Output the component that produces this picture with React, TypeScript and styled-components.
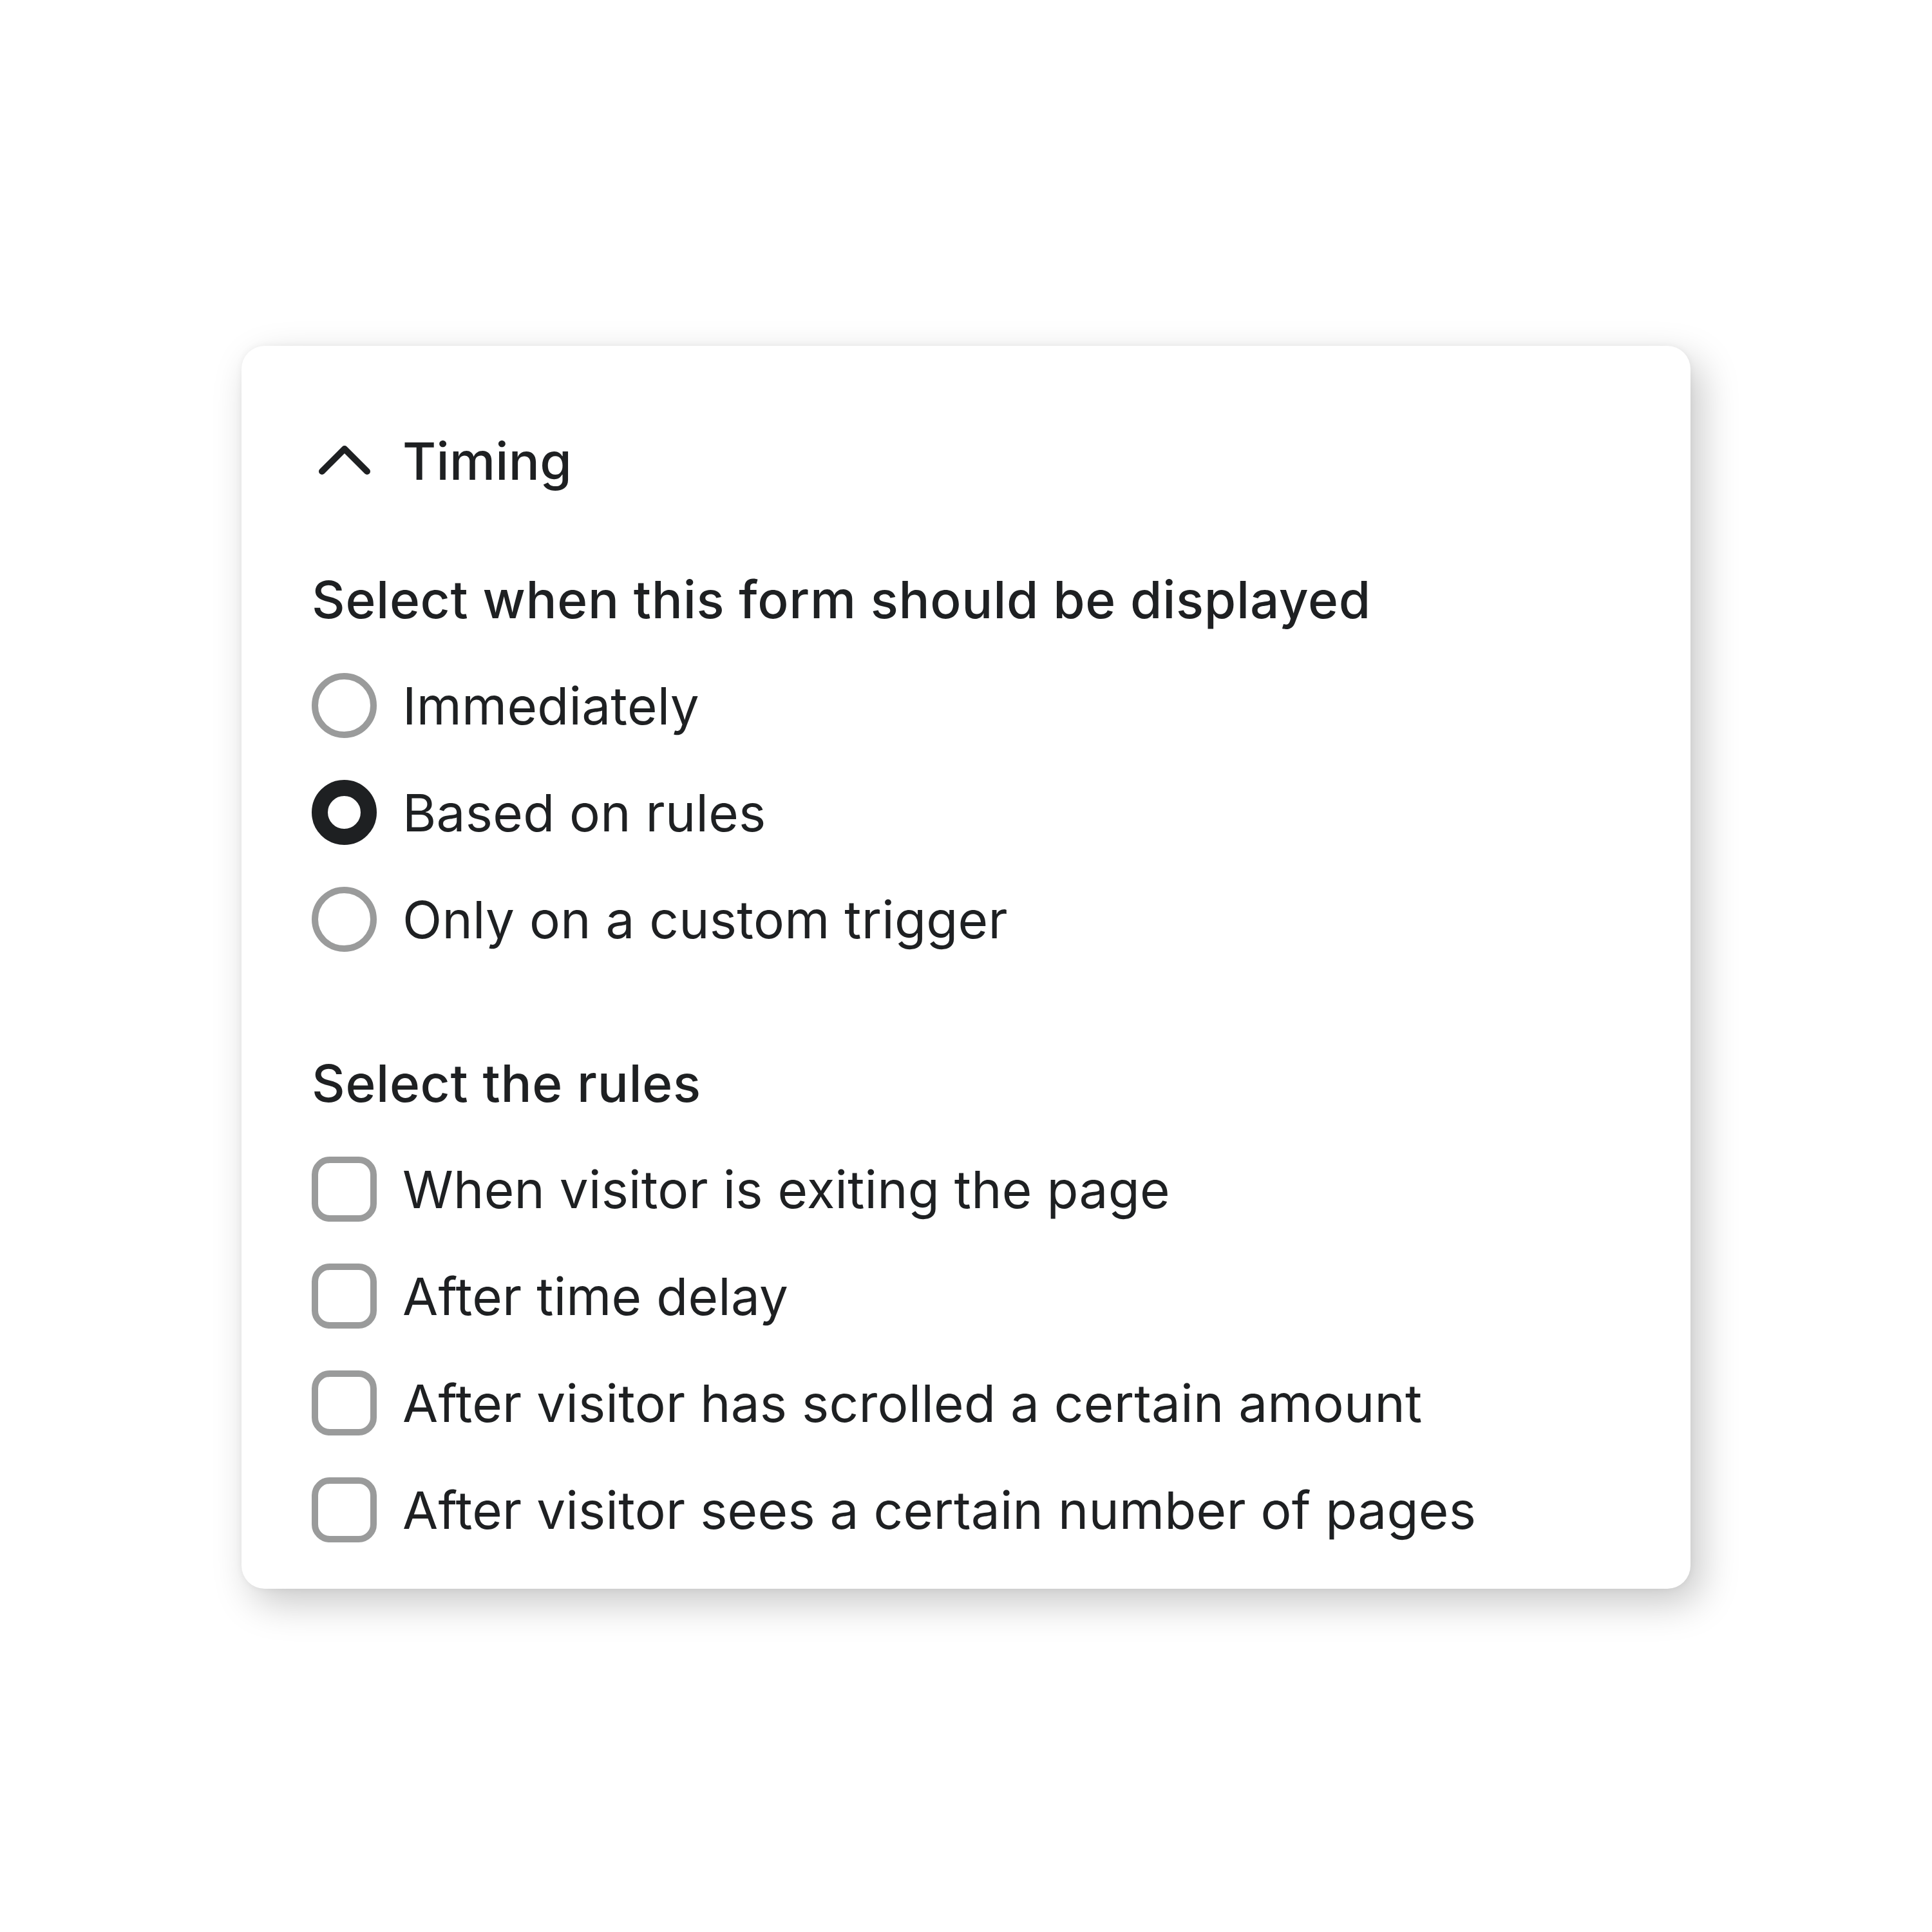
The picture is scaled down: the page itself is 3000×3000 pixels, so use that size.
import styled, { createGlobalStyle } from 'styled-components'

const GlobalStyle = createGlobalStyle`
  html, body {
    margin: 0;
    padding: 0;
    background: #ffffff;
  }

  body {
    font-family: 'Inter', 'Liberation Sans', sans-serif;
    color: #1e2022;
  }
`

const radioOptions = [
  { label: 'Immediately', checked: false },
  { label: 'Based on rules', checked: true },
  { label: 'Only on a custom trigger', checked: false },
]

const ruleOptions = [
  'When visitor is exiting the page',
  'After time delay',
  'After visitor has scrolled a certain amount',
  'After visitor sees a certain number of pages',
]

const ChevronUp = () => (
  <svg width="101" height="101" viewBox="0 0 101 101" fill="none">
    <path d="M16 67 L51 32 L86 67" stroke="#1e2022" strokeWidth="10" strokeLinecap="round" strokeLinejoin="round" />
  </svg>
)

export default function App() {
  return (
    <>
      <GlobalStyle />
      <Page>
        <Card>
          <Header>
            <ChevronUp />
            <Title>Timing</Title>
          </Header>

          <SectionLabel>Select when this form should be displayed</SectionLabel>
          <OptionList>
            {radioOptions.map(option => (
              <OptionRow key={option.label}>
                <Radio $checked={option.checked} />
                <OptionText>{option.label}</OptionText>
              </OptionRow>
            ))}
          </OptionList>

          <SectionLabel $spaced>Select the rules</SectionLabel>
          <OptionList>
            {ruleOptions.map(label => (
              <OptionRow key={label}>
                <Checkbox />
                <OptionText>{label}</OptionText>
              </OptionRow>
            ))}
          </OptionList>
        </Card>
      </Page>
    </>
  )
}

const Page = styled.div`
  display: flex;
  align-items: flex-start;
  width: 3000px;
  height: 3000px;
  padding: 537px 0 0 375px;
  box-sizing: border-box;
`

const Card = styled.div`
  display: flex;
  flex-direction: column;
  width: 2250px;
  padding: 128px 110px 72px 109px;
  box-sizing: border-box;
  background: #ffffff;
  border-radius: 36px;
  box-shadow:
    0 0 12px rgba(0, 0, 0, 0.05),
    16px 22px 60px rgba(0, 0, 0, 0.22);
`

const Header = styled.div`
  display: flex;
  align-items: center;
  gap: 40px;
  height: 101px;
`

const Title = styled.div`
  font-size: 80px;
  line-height: 80px;
  font-weight: 500;
  letter-spacing: 0.3px;
`

const SectionLabel = styled.div<{ $spaced?: boolean }>`
  margin-top: ${props => (props.$spaced ? '164px' : '125px')};
  margin-bottom: 74px;
  font-size: 80px;
  line-height: 80px;
  font-weight: 500;
  letter-spacing: 0.7px;
`

const OptionList = styled.div`
  display: flex;
  flex-direction: column;
  gap: 65px;
`

const OptionRow = styled.label`
  display: flex;
  align-items: center;
  gap: 40px;
  height: 101px;
`

const Radio = styled.span<{ $checked?: boolean }>`
  flex: none;
  width: 101px;
  height: 101px;
  box-sizing: border-box;
  border-radius: 50%;
  border: ${props => (props.$checked ? '25px solid #1e2022' : '10px solid #9a9b9b')};
  background: #ffffff;
`

const Checkbox = styled.span`
  flex: none;
  width: 101px;
  height: 101px;
  box-sizing: border-box;
  border-radius: 28px;
  border: 10px solid #9a9b9b;
  background: #ffffff;
`

const OptionText = styled.span`
  font-size: 80px;
  line-height: 80px;
  font-weight: 400;
  letter-spacing: 0.25px;
`
